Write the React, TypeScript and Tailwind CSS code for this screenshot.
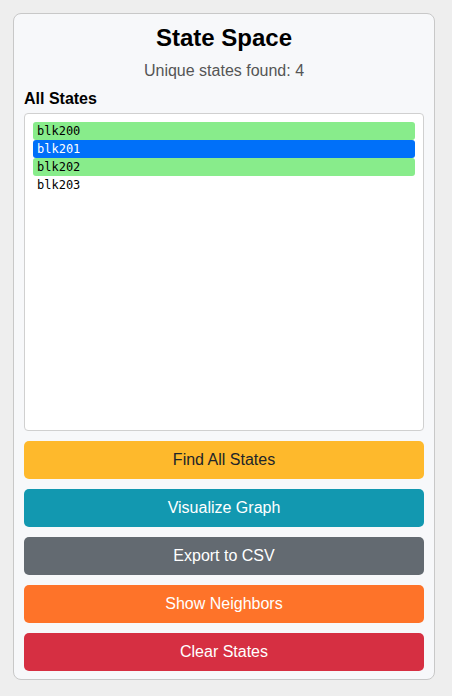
const STATES = [
  { name: 'blk200', kind: 'visited' },
  { name: 'blk201', kind: 'selected' },
  { name: 'blk202', kind: 'visited' },
  { name: 'blk203', kind: 'none' },
]

const BUTTONS = [
  { label: 'Find All States', cls: 'bg-[#feb92c] text-[#212529]' },
  { label: 'Visualize Graph', cls: 'bg-[#1298b0] text-white' },
  { label: 'Export to CSV', cls: 'bg-[#636a71] text-white' },
  { label: 'Show Neighbors', cls: 'bg-[#fe7329] text-white' },
  { label: 'Clear States', cls: 'bg-[#d62f42] text-white' },
]

export default function App() {
  return (
    <div className="min-h-screen bg-[#eeeeee] pt-[13px] px-[13px] font-['Liberation_Sans',Arial,sans-serif]">
      <div className="w-[422px] bg-[#f7f8fa] border border-[#c8c8c8] rounded-[8px] px-[10px] pt-[10px] pb-[8px]">
        <h2 className="text-[24px] leading-[28px] font-bold text-black text-center">State Space</h2>
        <p className="mt-[10px] text-[16px] leading-[18px] text-[#555] text-center">Unique states found: 4</p>
        <h3 className="mt-[10px] text-[16px] leading-[18px] font-bold text-black">All States</h3>
        <div className="mt-[5px] h-[318px] bg-white border border-[#d0d0d0] rounded-[4px] p-[8px]">
          {STATES.map((s) => (
            <div
              key={s.name}
              className={
                'h-[18px] leading-[18px] pl-[4px] rounded-[3px] text-[12px] font-["DejaVu_Sans_Mono",monospace] ' +
                (s.kind === 'visited'
                  ? 'bg-[#88ec8b] text-black'
                  : s.kind === 'selected'
                  ? 'bg-[#0070f9] text-white'
                  : 'text-black')
              }
            >
              {s.name}
            </div>
          ))}
        </div>
        <div className="mt-[10px] flex flex-col gap-[10px]">
          {BUTTONS.map((b) => (
            <button key={b.label} className={'h-[38px] w-full rounded-[5px] text-[16px] ' + b.cls}>
              {b.label}
            </button>
          ))}
        </div>
      </div>
    </div>
  )
}
